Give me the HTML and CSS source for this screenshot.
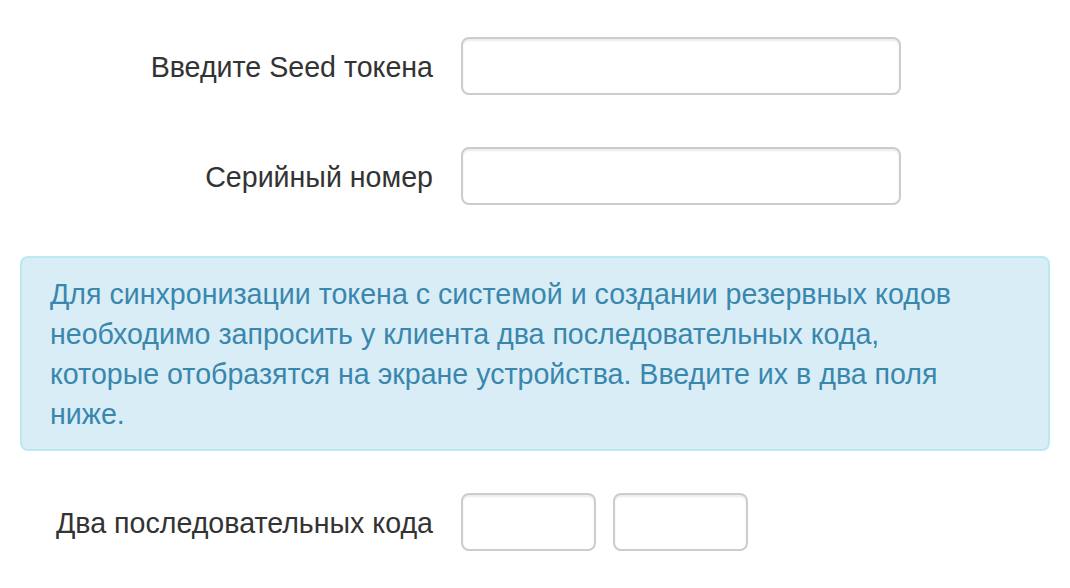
FILE: index.html
```html
<!doctype html>
<html>

<head>
  <title>Синхронизация токена</title>
  <link rel="stylesheet" href="styles.css">
</head>

<body>
  <form class="token-form">
    <div class="form-row">
      <label class="form-label" for="seed">Введите Seed токена</label>
      <input type="text" id="seed" class="form-input">
    </div>
    <div class="form-row">
      <label class="form-label" for="serial">Серийный номер</label>
      <input type="text" id="serial" class="form-input">
    </div>

    <div class="alert-info">
      Для синхронизации токена с системой и создании резервных кодов
      необходимо запросить у клиента два последовательных кода,
      которые отобразятся на экране устройства. Введите их в два поля
      ниже.
    </div>

    <div class="form-row">
      <label class="form-label" for="code1">Два последовательных кода</label>
      <div class="code-group">
        <input type="text" id="code1" class="form-input code-input">
        <input type="text" id="code2" class="form-input code-input">
      </div>
    </div>
  </form>
</body>

</html>
```
FILE: styles.css
```css
body {
  margin: 0;
  font-family: 'Liberation Sans', Arial, sans-serif;
  font-size: 28.6px;
  line-height: 40px;
  color: #333;
  background: #fff;
}

.token-form {
  display: flex;
  flex-direction: column;
  padding: 37px 20px 0 20px;
}

.form-row {
  display: grid;
  grid-template-columns: 413px 440px;
  column-gap: 28px;
  align-items: center;
  margin-bottom: 52px;
}

.form-row:nth-child(2) {
  margin-bottom: 51px;
}

.form-label {
  text-align: right;
  padding-top: 2px;
}

.form-input {
  box-sizing: border-box;
  width: 100%;
  height: 58px;
  margin: 0;
  border: 2px solid #ccc;
  border-radius: 8px;
  background-color: #fff;
  box-shadow: inset 0 2px 2px rgba(0, 0, 0, 0.075);
  font-size: 28px;
}

.code-group {
  display: flex;
  gap: 17px;
}

.code-input {
  width: 135px;
}

/* блок с подсказкой */
.alert-info {
  box-sizing: border-box;
  width: 1030px;
  padding: 16px 70px 15px 28px;
  margin-bottom: 42px;
  border: 2px solid #bce8f1;
  border-radius: 8px;
  background-color: #d9edf7;
  color: #3a87ad;
}
```
